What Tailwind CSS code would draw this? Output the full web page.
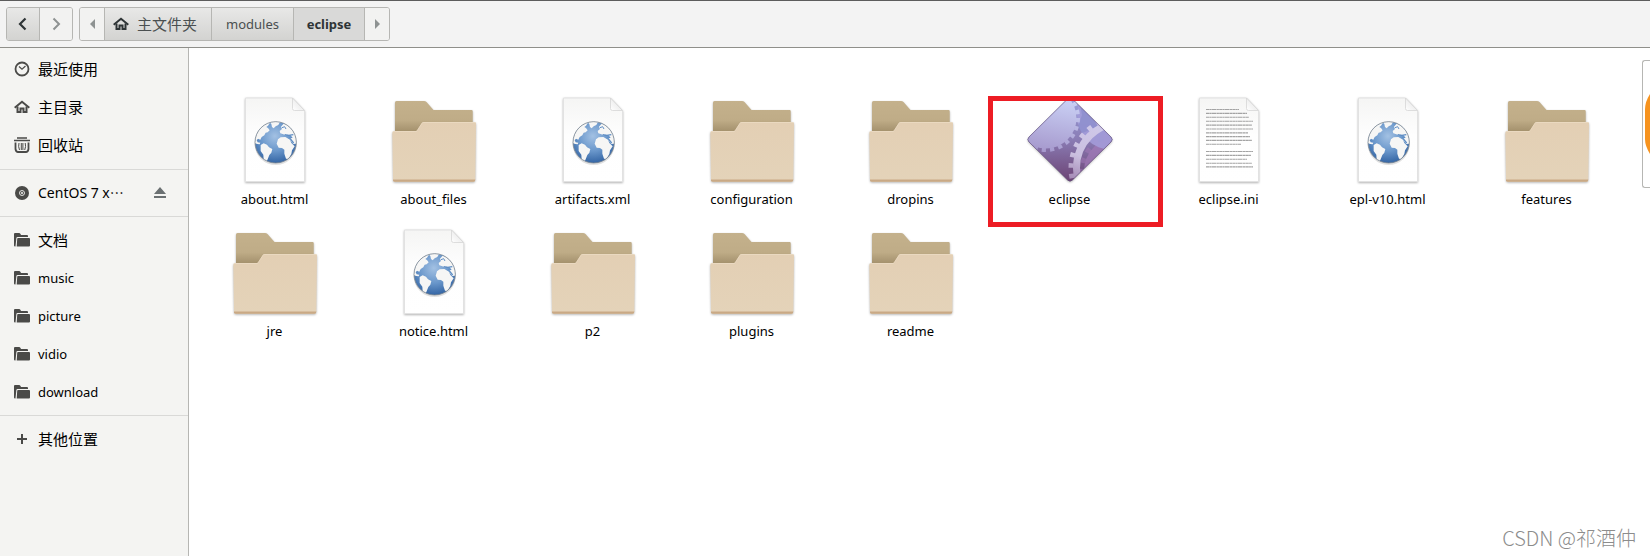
<!DOCTYPE html>
<html lang="zh-CN">
<head>
  <meta charset="UTF-8">
  <title>eclipse</title>
  <meta name="viewport" content="width=device-width, initial-scale=1.0">
  <script src="https://cdn.jsdelivr.net/npm/@tailwindcss/browser@4"></script>
</head>
<body class="h-screen flex flex-col overflow-hidden bg-white text-[13px] leading-5 text-black font-['Noto_Sans','Noto_Sans_CJK_SC',sans-serif]">

  <!-- Shared icons -->
  <svg class="absolute size-0" aria-hidden="true">
    <defs>
      <linearGradient id="folderBack" x1="0" y1="0" x2="0" y2="1">
        <stop offset="0" stop-color="#c4b18c" /><stop offset=".6" stop-color="#bfac87" /><stop offset="1" stop-color="#a08d69" />
      </linearGradient>
      <linearGradient id="folderFront" x1="0" y1="0" x2="0" y2="1">
        <stop offset="0" stop-color="#e3cfb4" /><stop offset="1" stop-color="#e4d3b9" />
      </linearGradient>
      <linearGradient id="paper" x1="0" y1="0" x2="0" y2="1">
        <stop offset="0" stop-color="#f5f5f4" /><stop offset=".45" stop-color="#fefefe" /><stop offset="1" stop-color="#ffffff" />
      </linearGradient>
      <linearGradient id="fold" x1="0" y1="1" x2="1" y2="0">
        <stop offset="0" stop-color="#ffffff" /><stop offset=".5" stop-color="#efefef" />
      </linearGradient>
      <radialGradient id="sea" cx=".48" cy=".35" r=".65">
        <stop offset="0" stop-color="#a3c1e3" /><stop offset=".55" stop-color="#6a97cb" /><stop offset="1" stop-color="#3465a4" />
      </radialGradient>
      <linearGradient id="gear" gradientUnits="userSpaceOnUse" x1="40" y1="4" x2="30" y2="60">
        <stop offset="0" stop-color="#cbd2f6" /><stop offset="1" stop-color="#a699cd" />
      </linearGradient>
      <linearGradient id="ring" gradientUnits="userSpaceOnUse" x1="75" y1="30" x2="55" y2="88">
        <stop offset="0" stop-color="#cfc9ea" /><stop offset=".6" stop-color="#cabfdf" /><stop offset="1" stop-color="#a58ab5" />
      </linearGradient>
      <linearGradient id="shade" x1="0" y1="0" x2="0" y2="1">
        <stop offset="0" stop-color="#9aa0dc" /><stop offset=".5" stop-color="#8a7cb4" /><stop offset="1" stop-color="#6c4374" />
      </linearGradient>
      <clipPath id="diamondClip"><path d="M45.500 6Q48 3.500 50.500 6L89 44Q91.500 46.500 89 49L50.500 87Q48 89.500 45.500 87L7 49Q4.500 46.500 7 44Z" /></clipPath>
      <clipPath id="globeClip"><circle cx="137" cy="172" r="62" /></clipPath>
      <filter id="soft" x="-10%" y="-10%" width="120%" height="125%" color-interpolation-filters="sRGB"><feDropShadow dx="0" dy="1" stdDeviation="1" flood-color="#000" flood-opacity=".3" /></filter>
    </defs>

    <symbol id="i-folder" viewBox="0 0 96 96">
      <g filter="url(#soft)">
        <path d="M9 40V9.500Q9 8 10.500 8H38Q39.500 8 40.500 9L47.500 17H85.500Q86.700 17 86.700 18V40Z" fill="url(#folderBack)" />
        <path d="M6.300 40Q6.300 38 8 38H29.500Q31 38 31.800 36.500L35.500 30.500Q36.500 29 38 29H88.500Q90 29 90 30.500L89.300 87Q89.300 88.700 87.500 88.700H9Q7 88.700 7 87Z" fill="url(#folderFront)" />
      </g>
      <path d="M7 86.500L7 87.500Q7.200 88.700 9 88.700H87.500Q89.300 88.700 89.300 86.500Z" fill="#c9a985" />
      <path d="M7 38.500H30.500L36.500 29.500H89.500" fill="none" stroke="#ecdcc5" stroke-width=".7" />
    </symbol>

    <symbol id="i-paper" viewBox="0 0 96 96">
      <path d="M18.500 5H65.500L77.500 17.500V88.500H18.500Z" fill="url(#paper)" stroke="#e2e2e2" filter="url(#soft)" />
      <path d="M65.500 5V15.500Q65.500 17.500 67.500 17.500H77.500Z" fill="url(#fold)" stroke="#d6d6d6" stroke-width=".8" />
    </symbol>

    <symbol id="i-html" viewBox="0 0 96 96">
      <use href="#i-paper" width="96" height="96" />
      <g transform="translate(3 -8) scale(.33333)">
        <ellipse cx="137" cy="178" rx="63" ry="62" fill="#000" opacity=".12" />
        <circle cx="137" cy="172" r="62" fill="url(#sea)" />
        <g clip-path="url(#globeClip)" fill="#f6f6f5">
          <path d="M72 174L70 140L92 122L108 114L120 113L114 122L109 126L114 129L119 136L113 142L107 143L103 151L95 156L91 164L84 161L80 166L83 172L91 173L89 178L82 177Z" />
          <path d="M118 111L132 107L150 111L145 120L137 124L131 130L126 126L124 117Z" />
          <path d="M92 180L101 175L111 179L117 187L127 192L124 203L118 210L113 223L109 232L101 224L100 209L92 198Z" />
          <path d="M151 145L149 138L156 132L153 125L160 117L174 118L190 132L203 160L205 184L198 176L190 177L181 166L178 160L188 159L182 151L173 149L167 151L160 148Z" />
          <path d="M140 176L144 163L152 157L166 156L180 164L184 174L194 184L186 196L184 207L175 222L168 221L163 206L163 194L156 189L146 188Z" />
          <path d="M107 230L130 233L120 240Z" opacity=".5" />
        </g>
        <g fill="none" stroke="#5e8dc4" stroke-width="4">
          <path d="M164 149L176 151L190 149M178 158L191 174" />
          <path d="M156 128L164 125L168 132" stroke-width="3" />
        </g>
        <circle cx="137" cy="172" r="62" fill="none" stroke="#7b858f" stroke-width="3" opacity=".8" />
      </g>
    </symbol>

    <symbol id="i-text" viewBox="0 0 96 96">
      <use href="#i-paper" width="96" height="96" />
      <g fill="none" stroke="#a3a3a3" stroke-width="1.100" stroke-dasharray="3.200 .3 1.800 .3 4.500 .4 2.400 .3">
        <path d="M25 16.500H58M25 20.400H66M25 24.300H68M25 28.200H72M25 32.100H71M25 36H72M25 39.900H67M25 43.600H69M25 47.400H71M25 51.200H60M25 58.500H72M25 62.400H70M25 66.300H66M25 70.200H71M25 73.900H72" />
      </g>
    </symbol>

    <symbol id="i-eclipse" viewBox="0 0 96 96">
      <path d="M45.500 6Q48 3.500 50.500 6L89 44Q91.500 46.500 89 49L50.500 87Q48 89.500 45.500 87L7 49Q4.500 46.500 7 44Z" fill="url(#shade)" filter="url(#soft)" />
      <g clip-path="url(#diamondClip)">
        <circle cx="96" cy="78" r="34" fill="#a37ab8" opacity=".7" />
        <circle cx="96" cy="78" r="36" fill="none" stroke="#a37ab8" stroke-width="5" stroke-dasharray="5 6" opacity=".5" />
        <circle cx="90" cy="22" r="35" fill="#a39ddb" opacity=".85" />
        <path d="M56 0L76 34L60 40L56 34L60 22Z" fill="#7f86c6" opacity=".45" />
        <!-- upper left gear -->
        <circle cx="24" cy="25" r="30.500" fill="url(#gear)" />
        <circle cx="24" cy="25" r="32" fill="none" stroke="url(#gear)" stroke-width="4" stroke-dasharray="4.200 4.180" />
        <!-- lower right ring -->
        <circle cx="100" cy="75" r="45.500" fill="none" stroke="url(#ring)" stroke-width="7" />
        <circle cx="100" cy="75" r="51" fill="none" stroke="url(#ring)" stroke-width="5" stroke-dasharray="4.600 6.080" />
      </g>
      <path d="M45.500 6Q48 3.500 50.500 6L89 44Q91.500 46.500 89 49L50.500 87Q48 89.500 45.500 87L7 49Q4.500 46.500 7 44Z" fill="none" stroke="#5c4a78" stroke-width="1" opacity=".6" />
    </symbol>

    <symbol id="i-home" viewBox="0 0 16 16">
      <path d="M.7 8.700L8 2.800L15.300 8.700" fill="none" stroke="currentColor" stroke-width="2" />
      <path d="M3.500 7.500V13H6.500V9.500H9.500V13H12.500V7.500" fill="none" stroke="currentColor" stroke-width="2" />
    </symbol>

    <symbol id="i-dir" viewBox="0 0 16 16">
      <path d="M0 2Q0 1 1 1H5Q6 1 6.500 2L7 3H13Q14 3 14 4V5H3.500Q2.500 5 2.400 6L1.500 14.500H1Q0 14.500 0 13.500Z" fill="currentColor" />
      <path d="M4 6H15Q16 6 16 7V13.500Q16 14.500 15 14.500H2.700L3.200 7Q3.200 6 4 6Z" fill="currentColor" />
    </symbol>
  </svg>

  <!-- Toolbar -->
  <header class="flex items-center gap-1.5 px-1.5 h-12 shrink-0 border-t border-t-[#5c5c5c] border-b border-b-[#8f8f8a] bg-[#f3f3f3] text-[#4a4f50]">
    <div class="flex h-[34px] border border-[#b6b6b3] rounded-[3px] overflow-hidden">
      <button class="w-[33px] flex items-center justify-center border-r border-[#b6b6b3] bg-linear-to-b from-[#e8e8e7] to-[#d3d3d1] text-[#2e3436]" aria-label="后退">
        <svg class="size-4" viewBox="0 0 16 16" fill="none" stroke="currentColor" stroke-width="2.200"><path d="M10.500 2.500L5 8L10.500 13.500" /></svg>
      </button>
      <button class="w-8 flex items-center justify-center bg-[#f2f2f1] text-[#8e9292]" aria-label="前进">
        <svg class="size-4" viewBox="0 0 16 16" fill="none" stroke="currentColor" stroke-width="2"><path d="M5.500 2.500L11 8L5.500 13.500" /></svg>
      </button>
    </div>
    <nav class="flex h-[34px] border border-[#b6b6b3] rounded-[3px] overflow-hidden">
      <button class="w-6 flex items-center justify-center bg-[#f2f2f1] text-[#8e9292]" aria-label="向左">
        <svg class="h-2.5 w-[5px]" viewBox="0 0 5 10"><path d="M5 0V10L0 5Z" fill="currentColor" /></svg>
      </button>
      <button class="w-[107px] flex items-center gap-2 pl-2 border-l border-[#b6b6b3] bg-linear-to-b from-[#e8e8e7] to-[#d3d3d1]">
        <svg class="size-4 text-[#2e3436]"><use href="#i-home" /></svg>
        <span class="text-[15px]">主文件夹</span>
      </button>
      <button class="w-[82px] border-l border-[#b6b6b3] bg-linear-to-b from-[#e8e8e7] to-[#d3d3d1]">modules</button>
      <button class="w-[71px] border-l border-[#b6b6b3] bg-[#d9d9d8] font-bold text-[#2e3436]">eclipse</button>
      <button class="w-[25px] flex items-center justify-center border-l border-[#b6b6b3] bg-[#f2f2f1] text-[#8e9292]" aria-label="向右">
        <svg class="h-2.5 w-[5px]" viewBox="0 0 5 10"><path d="M0 0V10L5 5Z" fill="currentColor" /></svg>
      </button>
    </nav>
  </header>

  <div class="flex flex-1 min-h-0 relative">

    <!-- Places sidebar -->
    <aside class="w-[189px] shrink-0 pt-0.5 border-r border-[#b6b6b3] bg-[#f4f4f2]">
      <a href="#" class="flex items-center gap-2 h-[38px] px-3.5">
        <svg class="size-4 text-[#4a4a48]" viewBox="0 0 16 16" fill="none" stroke="currentColor"><circle cx="8" cy="8" r="6.500" stroke-width="1.800" /><path d="M5 5.500L8 8.200L11.500 5" stroke-width="1.200" /></svg>
        <span class="text-[15px]">最近使用</span>
      </a>
      <a href="#" class="flex items-center gap-2 h-[38px] px-3.5">
        <svg class="size-4 text-[#4a4a48]"><use href="#i-home" /></svg>
        <span class="text-[15px]">主目录</span>
      </a>
      <a href="#" class="flex items-center gap-2 h-[38px] px-3.5">
        <svg class="size-4 text-[#4a4a48]" viewBox="0 0 16 16" fill="none" stroke="currentColor">
          <path d="M3 1H13M0 3.500H16" stroke-width="1.600" />
          <path d="M1.500 5.500V12Q2 15 4 15H12Q14 15 14.500 12V5.500" stroke-width="1.800" />
          <path d="M5 6Q4 9.500 5.500 13M7.300 6V13M8.900 6V13M11.200 6Q12.200 9.500 10.700 13" />
        </svg>
        <span class="text-[15px]">回收站</span>
      </a>
      <hr class="mt-[5px] mb-1 border-[#d9d9d7]">
      <a href="#" class="flex items-center gap-2 h-[38px] px-3.5">
        <svg class="size-4 text-[#4a4a48]" viewBox="0 0 16 16"><circle cx="8" cy="8" r="7" fill="currentColor" /><circle cx="8" cy="8" r="2.500" fill="none" stroke="#f4f4f2" stroke-width=".9" /><circle cx="8" cy="8" r="1" fill="#f4f4f2" /></svg>
        <span class="flex-1 text-[14px]">CentOS 7 x⋯</span>
        <svg class="size-4 mr-1.5 text-[#6b7072]" viewBox="0 0 16 16"><path d="M8 2L14 9H2ZM2 11H14V13H2Z" fill="currentColor" /></svg>
      </a>
      <hr class="my-1 border-[#d9d9d7]">
      <a href="#" class="flex items-center gap-2 h-[38px] px-3.5">
        <svg class="size-4 text-[#4a4a48]"><use href="#i-dir" /></svg>
        <span class="text-[15px]">文档</span>
      </a>
      <a href="#" class="flex items-center gap-2 h-[38px] px-3.5">
        <svg class="size-4 text-[#4a4a48]"><use href="#i-dir" /></svg>
        <span>music</span>
      </a>
      <a href="#" class="flex items-center gap-2 h-[38px] px-3.5">
        <svg class="size-4 text-[#4a4a48]"><use href="#i-dir" /></svg>
        <span>picture</span>
      </a>
      <a href="#" class="flex items-center gap-2 h-[38px] px-3.5">
        <svg class="size-4 text-[#4a4a48]"><use href="#i-dir" /></svg>
        <span>vidio</span>
      </a>
      <a href="#" class="flex items-center gap-2 h-[38px] px-3.5">
        <svg class="size-4 text-[#4a4a48]"><use href="#i-dir" /></svg>
        <span>download</span>
      </a>
      <hr class="my-1 border-[#d9d9d7]">
      <a href="#" class="flex items-center gap-2 h-[38px] px-3.5">
        <svg class="size-4 text-[#4a4a48]" viewBox="0 0 16 16" stroke="currentColor" stroke-width="2"><path d="M8 3V13M3 8H13" /></svg>
        <span class="text-[15px]">其他位置</span>
      </a>
    </aside>

    <!-- Files -->
    <main class="flex-1 pl-1.5 pt-[45px]">
      <div class="grid grid-cols-[repeat(auto-fill,159px)] gap-y-4">
        <a href="#" class="flex flex-col items-center"><svg class="size-24"><use href="#i-html" /></svg><span>about.html</span></a>
        <a href="#" class="flex flex-col items-center"><svg class="size-24"><use href="#i-folder" /></svg><span>about_files</span></a>
        <a href="#" class="flex flex-col items-center"><svg class="size-24"><use href="#i-html" /></svg><span>artifacts.xml</span></a>
        <a href="#" class="flex flex-col items-center"><svg class="size-24"><use href="#i-folder" /></svg><span>configuration</span></a>
        <a href="#" class="flex flex-col items-center"><svg class="size-24"><use href="#i-folder" /></svg><span>dropins</span></a>
        <a href="#" class="relative flex flex-col items-center">
          <svg class="size-24"><use href="#i-eclipse" /></svg><span>eclipse</span>
          <!-- highlight frame -->
          <span class="absolute -left-0.5 top-[3px] w-[175px] h-[131px] border-5 border-[#ed1c24]"></span>
        </a>
        <a href="#" class="flex flex-col items-center"><svg class="size-24"><use href="#i-text" /></svg><span>eclipse.ini</span></a>
        <a href="#" class="flex flex-col items-center"><svg class="size-24"><use href="#i-html" /></svg><span>epl-v10.html</span></a>
        <a href="#" class="flex flex-col items-center"><svg class="size-24"><use href="#i-folder" /></svg><span>features</span></a>
        <a href="#" class="flex flex-col items-center"><svg class="size-24"><use href="#i-folder" /></svg><span>jre</span></a>
        <a href="#" class="flex flex-col items-center"><svg class="size-24"><use href="#i-html" /></svg><span>notice.html</span></a>
        <a href="#" class="flex flex-col items-center"><svg class="size-24"><use href="#i-folder" /></svg><span>p2</span></a>
        <a href="#" class="flex flex-col items-center"><svg class="size-24"><use href="#i-folder" /></svg><span>plugins</span></a>
        <a href="#" class="flex flex-col items-center"><svg class="size-24"><use href="#i-folder" /></svg><span>readme</span></a>
      </div>
    </main>

    <!-- Floating widget docked at the right edge -->
    <div class="absolute right-0 top-3 w-2 h-32 border border-r-0 border-[#b6b6b3] rounded-l-[3px] bg-white flex items-center justify-end">
      <svg class="w-[5px] h-15" viewBox="0 0 5 60"><path d="M5 0Q0 8 0 15V45Q0 52 5 60Z" fill="#f7931e" /></svg>
    </div>

    <!-- Watermark -->
    <p class="absolute right-3.5 bottom-1 text-[20px] leading-7 text-[#8c8c8c] font-light font-['Noto_Sans_CJK_SC',sans-serif]">CSDN @祁酒仲</p>
  </div>

</body>
</html>
